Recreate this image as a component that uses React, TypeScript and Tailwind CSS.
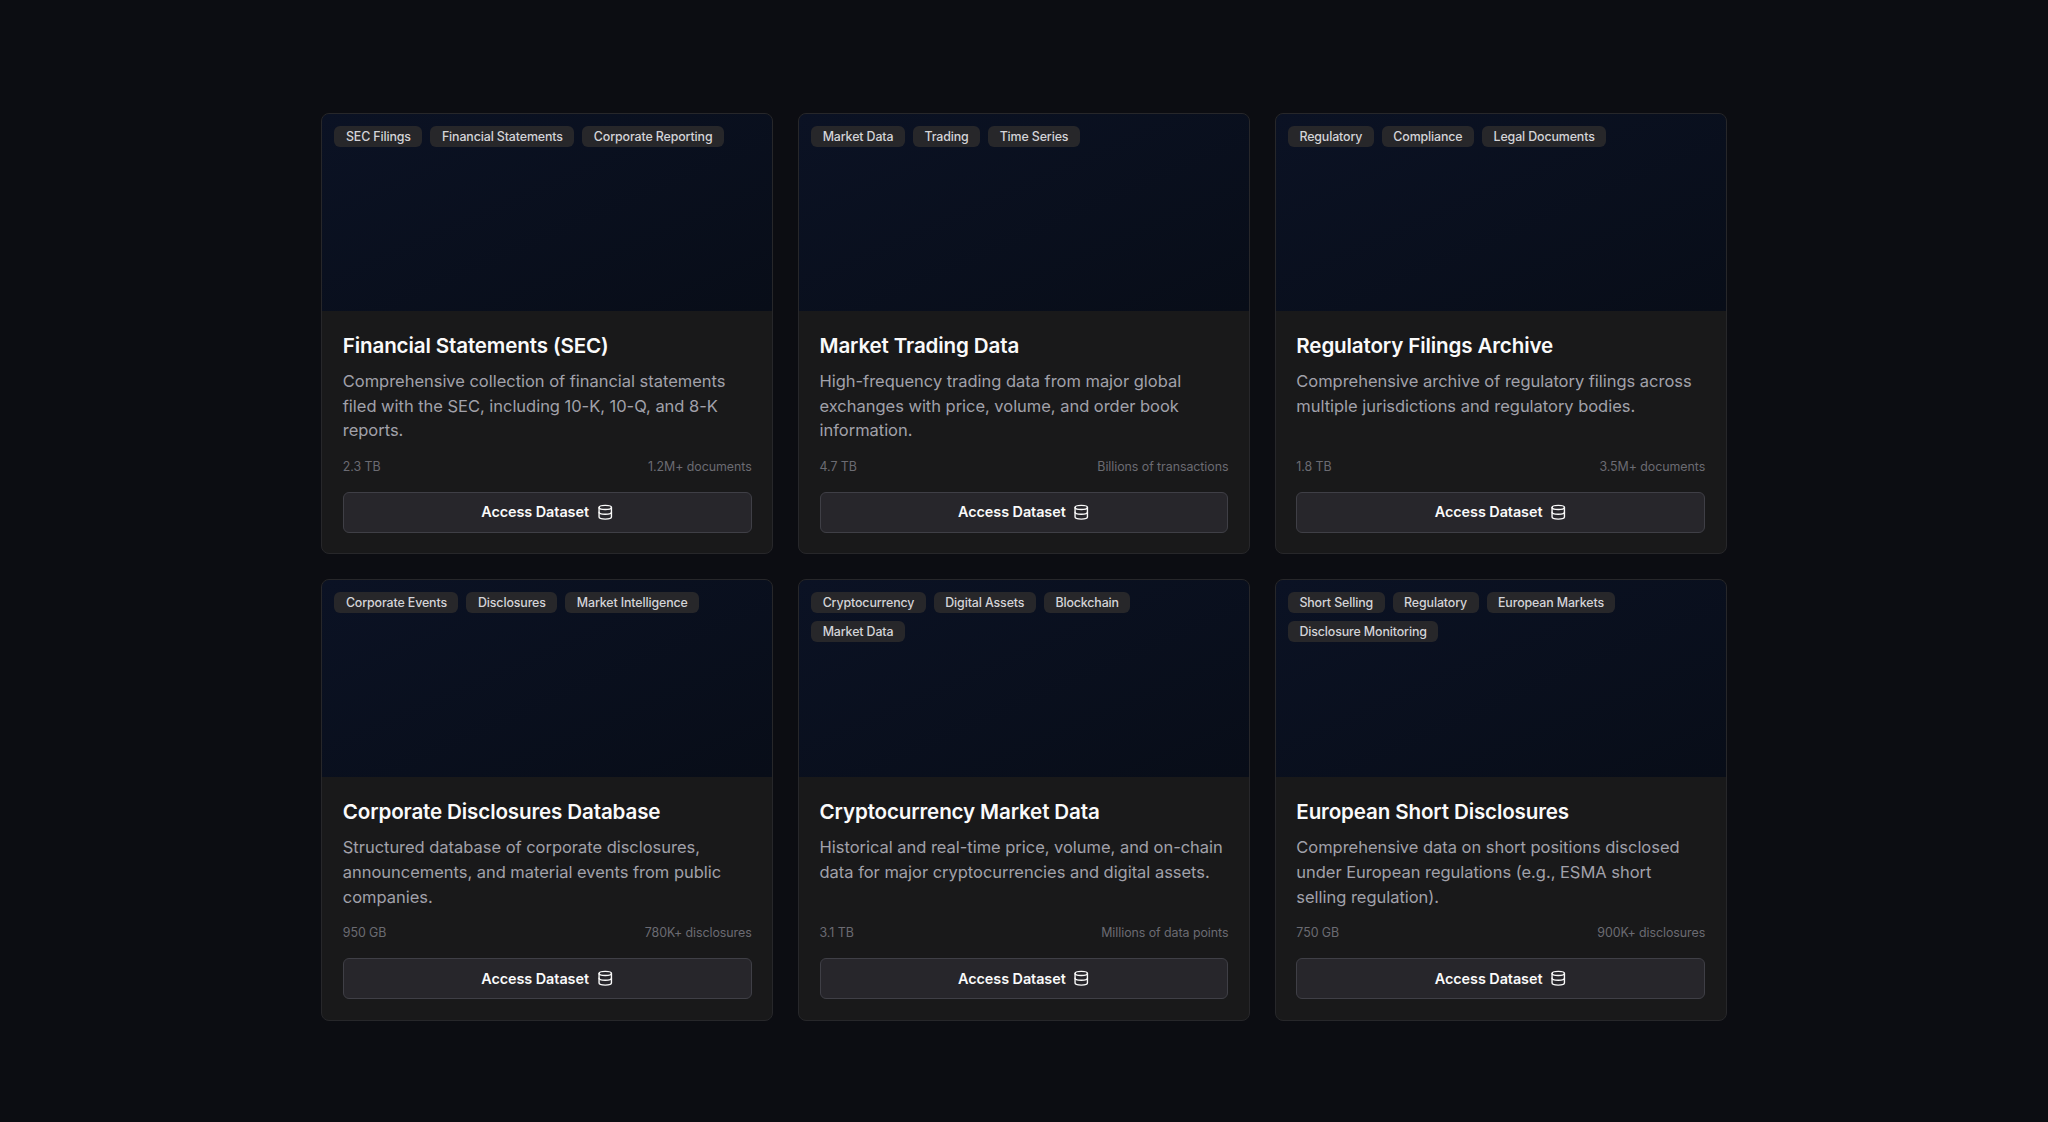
import { Database } from 'lucide-react';

type Dataset = {
  title: string;
  description: string;
  tags: string[];
  size: string;
  records: string;
};

const DATASETS: Dataset[] = [
  {
    title: 'Financial Statements (SEC)',
    description:
      'Comprehensive collection of financial statements filed with the SEC, including 10-K, 10-Q, and 8-K reports.',
    tags: ['SEC Filings', 'Financial Statements', 'Corporate Reporting'],
    size: '2.3 TB',
    records: '1.2M+ documents',
  },
  {
    title: 'Market Trading Data',
    description:
      'High-frequency trading data from major global exchanges with price, volume, and order book information.',
    tags: ['Market Data', 'Trading', 'Time Series'],
    size: '4.7 TB',
    records: 'Billions of transactions',
  },
  {
    title: 'Regulatory Filings Archive',
    description:
      'Comprehensive archive of regulatory filings across multiple jurisdictions and regulatory bodies.',
    tags: ['Regulatory', 'Compliance', 'Legal Documents'],
    size: '1.8 TB',
    records: '3.5M+ documents',
  },
  {
    title: 'Corporate Disclosures Database',
    description:
      'Structured database of corporate disclosures, announcements, and material events from public companies.',
    tags: ['Corporate Events', 'Disclosures', 'Market Intelligence'],
    size: '950 GB',
    records: '780K+ disclosures',
  },
  {
    title: 'Cryptocurrency Market Data',
    description:
      'Historical and real-time price, volume, and on-chain data for major cryptocurrencies and digital assets.',
    tags: ['Cryptocurrency', 'Digital Assets', 'Blockchain', 'Market Data'],
    size: '3.1 TB',
    records: 'Millions of data points',
  },
  {
    title: 'European Short Disclosures',
    description:
      'Comprehensive data on short positions disclosed under European regulations (e.g., ESMA short selling regulation).',
    tags: ['Short Selling', 'Regulatory', 'European Markets', 'Disclosure Monitoring'],
    size: '750 GB',
    records: '900K+ disclosures',
  },
];

const DatasetCard = ({ dataset }: { dataset: Dataset }) => {
  return (
    <article className="flex flex-col overflow-hidden rounded-lg border border-[#27272a] bg-[#19191a]">
      {/* Cover with tags */}
      <div className="h-[197.3px] shrink-0 bg-linear-to-br from-[#0b1224] to-[#080d18] py-[12.4px] pr-6 pl-[12.2px]">
        <div className="flex flex-wrap gap-x-[8px] gap-y-[8.2px]">
          {dataset.tags.map((tag) => (
            <span
              key={tag}
              className="flex h-[20.6px] items-center rounded-md bg-[#27272a] px-[11.5px] pt-px text-[12.4px] font-medium tracking-[-0.12px] text-[#d4d4d8]"
            >
              {tag}
            </span>
          ))}
        </div>
      </div>

      {/* Body */}
      <div className="flex grow flex-col p-[20.6px]">
        <h3 className="text-[20.6px] leading-[28.8px] font-semibold tracking-[-0.14px] text-[#fafafa]">
          {dataset.title}
        </h3>
        <p className="mt-[8.4px] text-[16.5px] leading-[24.7px] tracking-[-0.03px] text-[#a1a1aa]">
          {dataset.description}
        </p>
        <div className="mt-auto flex justify-between text-[12.4px] leading-[16.5px] tracking-[-0.05px] text-[#6b6b72]">
          <span>{dataset.size}</span>
          <span>{dataset.records}</span>
        </div>
        <button className="mt-[16.1px] flex h-[41.2px] shrink-0 items-center justify-center gap-[7.8px] rounded-md border border-[#3f3f46] bg-[#27262b] text-[14.4px] font-semibold tracking-[-0.06px] text-[#fafafa]">
          Access Dataset
          <Database className="size-[16.5px]" />
        </button>
      </div>
    </article>
  );
};

const App = () => {
  return (
    <main className="min-h-screen bg-[#0c0d12] pt-[112.8px] font-['Inter',sans-serif] antialiased">
      <div className="mx-auto grid w-[1405.6px] auto-rows-[441.6px] grid-cols-3 gap-[24.7px]">
        {DATASETS.map((dataset) => (
          <DatasetCard key={dataset.title} dataset={dataset} />
        ))}
      </div>
    </main>
  );
};

export default App;
